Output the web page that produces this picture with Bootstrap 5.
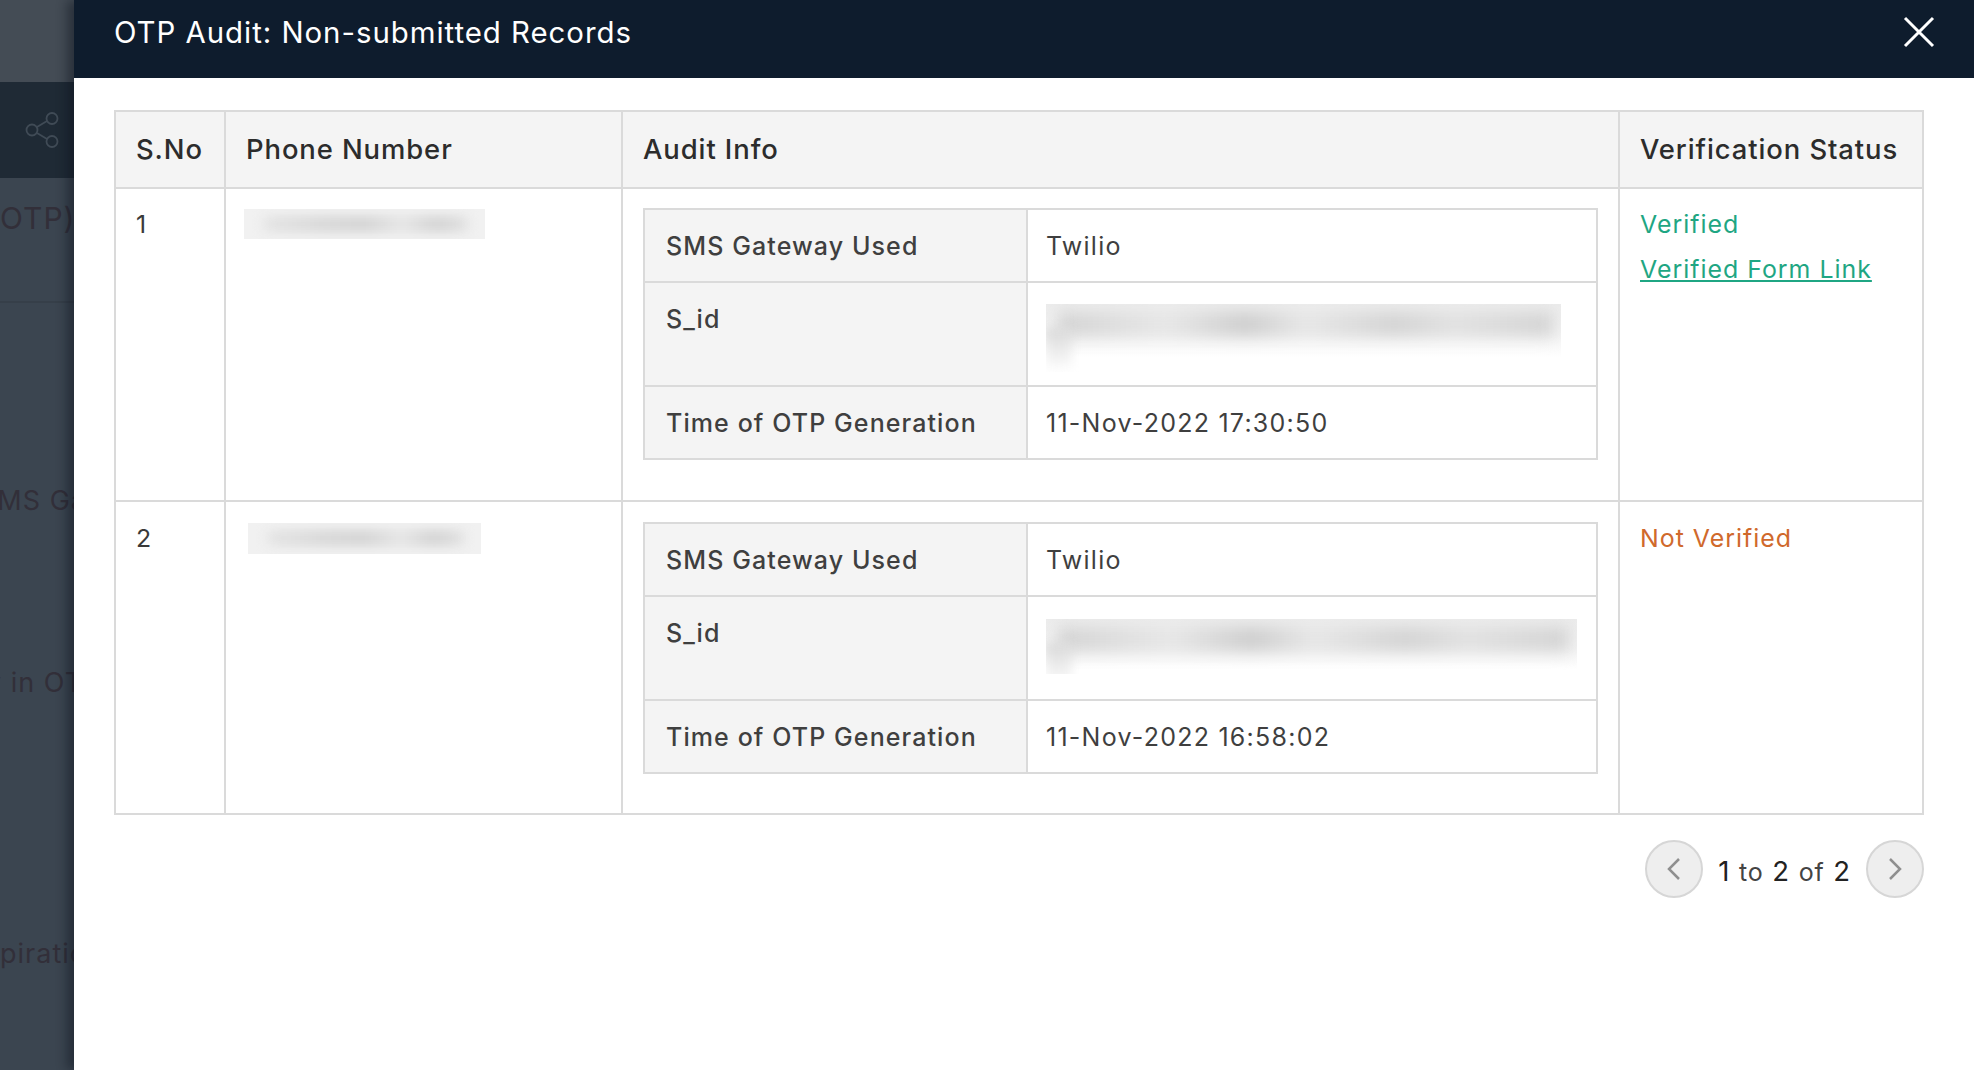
<!DOCTYPE html>
<html lang="en">
<head>
<meta charset="utf-8">
<title>OTP Audit</title>
<link rel="stylesheet" href="https://cdn.jsdelivr.net/npm/bootstrap@5.3.0/dist/css/bootstrap.min.css">
<style>
html,body{height:1070px;overflow:hidden;background:#3b4550;font-family:Inter,"Liberation Sans",sans-serif;}
.pagewrap{height:1070px;position:relative;overflow:hidden;}
.backstrip{width:74px;height:1070px;overflow:hidden;color:#322f39;font-size:27px;white-space:nowrap;letter-spacing:1px;}
.strip-top{height:82px;background:#444c55;}
.strip-band{height:96px;background:#1f2a35;padding-left:10px;}
.strip-otp{height:125px;border-bottom:2px solid #363f49;padding-top:22px;font-size:30px;line-height:36px;}
.strip-sms{padding-top:181px;line-height:34px;margin-left:-21px;}
.strip-in{padding-top:148px;line-height:34px;margin-left:-14px;}
.strip-exp{padding-top:237px;line-height:34px;}
.sidepanel{position:absolute;left:74px;top:0;right:0;bottom:0;background:#fff;box-shadow:-7px 0 10px rgba(10,18,28,.45);}
.panelhead{height:78px;background:#0e1c2d;color:#fff;padding:0 39px 0 40px;}
.paneltitle{font-size:29.4px;line-height:66px;font-weight:400;margin:0;letter-spacing:.97px;}
.closebtn{background:none;border:0;padding:0;width:32px;height:32px;line-height:0;}
.panelbody{padding:32px 50px 0 40px;}
.audit{table-layout:fixed;width:1808px;border-collapse:collapse;margin:0;}
.audit>thead>tr>th,.audit>tbody>tr>td{border:2px solid #dadada;padding:20px 20px 21px;font-size:24.9px;line-height:30px;vertical-align:top;color:#3a3a3a;background:#fff;box-shadow:none;letter-spacing:1px;}
.audit>thead>tr>th{background:#f4f4f4;font-weight:500;font-size:27.4px;color:#2c2c2c;height:77px;padding-top:22px;padding-bottom:0;letter-spacing:.92px;}
.audit>tbody>tr+tr>td{padding-top:21px;}
.audit>tbody>tr>td.audit-row{height:313px;}
.audit>tbody>tr>td.vno{color:#d0692c;}
.c1{width:110px}.c2{width:397px}.c3{width:997px}.c4{width:304px}
.inner{table-layout:fixed;width:955px;border-collapse:collapse;margin:-1px 0 0;}
.inner th,.inner td{border:2px solid #dadada;padding:21px;font-size:25px;line-height:30px;vertical-align:top;color:#3f3f3f;letter-spacing:1.25px;}
.inner td{padding-left:18px;padding-bottom:0;}
.inner th{width:383px;background:#f4f4f4;font-weight:500;padding-bottom:0;letter-spacing:1.1px;}
.inner tr.r1>*{height:73px;}
.inner tr.r2>*{height:104px;}
.inner tr.r3>*{height:73px;}
.vok{color:#1fa683;line-height:45px;margin-top:-7px;}
.vok a{color:#1fa683;display:block;}
.maskbox{overflow:hidden;position:relative;background:#f1f1f1;}
.mask-p1{width:241px;height:30px;margin:0 0 0 -2px;}
.mask-p2{width:233px;height:31px;margin:0 0 0 2px;}
.maskbar{position:absolute;filter:blur(6px);background:linear-gradient(to right,#e2e2e2,#d4d4d4 30%,#d0d0d0 50%,#e4e4e4 68%,#cfcfcf 85%,#dedede);}
.mask-p1 .maskbar,.mask-p2 .maskbar{left:20px;right:18px;top:8px;height:14px;}
.maskid{background:#fff;}
.mask-i1{width:515px;height:68px;background:linear-gradient(#ececec,#f3f3f3 45%,#fff 78%);}
.mask-i2{width:531px;height:55px;margin-top:1px;background:linear-gradient(#ececec,#f3f3f3 55%,#fff 92%);}
.maskid .maskbar{left:12px;right:8px;top:8px;height:24px;filter:blur(8px);background:linear-gradient(to right,#d2d2d2,#e6e6e6 22%,#cccccc 38%,#e6e6e6 50%,#d2d2d2 68%,#e0e0e0 80%,#d2d2d2);}
.maskid .masktail{position:absolute;left:0;top:24px;width:26px;height:44px;background:linear-gradient(#d8d8d8,#fff);filter:blur(5px);}
.pagerrow{margin-top:25px;height:58px;}
.pgbtn{width:58px;height:58px;border-radius:50%;background:#eee;border:2px solid #d6d6d6;padding:0;line-height:0;}
.pgtext{font-size:27.5px;color:#222;padding:0 15px;line-height:58px;margin-top:4px;letter-spacing:.9px;}
.pgtext span{font-size:25px;color:#444;}
</style>
</head>
<body>
<div class="pagewrap">
  <div class="backstrip">
    <div class="strip-top"></div>
    <div class="strip-band d-flex align-items-center justify-content-center">
      <svg width="34" height="36" viewBox="0 0 34 36" fill="none" stroke="#404b56" stroke-width="1.800"><circle cx="7" cy="18" r="5.500"/><circle cx="27" cy="6.500" r="5.500"/><circle cx="27" cy="29.500" r="5.500"/><path d="M12 15 22 9M12 21 22 27"/></svg>
    </div>
    <div class="strip-otp">OTP)</div>
    <div class="strip-sms">SMS Gateway</div>
    <div class="strip-in">y in OTP</div>
    <div class="strip-exp">piration</div>
  </div>
  <div class="sidepanel">
    <div class="panelhead d-flex justify-content-between">
      <h5 class="paneltitle">OTP Audit: Non-submitted Records</h5>
      <button class="closebtn mt-3" type="button" aria-label="Close">
        <svg width="32" height="32" viewBox="0 0 32 32" stroke="#fff" stroke-width="3" fill="none"><path d="M2 2 30 30M30 2 2 30"/></svg>
      </button>
    </div>
    <div class="panelbody">
      <table class="table audit">
        <thead>
          <tr><th class="c1">S.No</th><th class="c2">Phone Number</th><th class="c3">Audit Info</th><th class="c4">Verification Status</th></tr>
        </thead>
        <tbody>
          <tr>
            <td class="audit-row">1</td>
            <td><div class="maskbox mask-p1"><div class="maskbar"></div></div></td>
            <td>
              <table class="inner">
                <tr class="r1"><th>SMS Gateway Used</th><td>Twilio</td></tr>
                <tr class="r2"><th>S_id</th><td><div class="maskbox maskid mask-i1"><div class="maskbar"></div><div class="masktail"></div></div></td></tr>
                <tr class="r3"><th>Time of OTP Generation</th><td>11-Nov-2022 17:30:50</td></tr>
              </table>
            </td>
            <td><div class="vok">Verified<a href="#">Verified Form Link</a></div></td>
          </tr>
          <tr>
            <td class="audit-row">2</td>
            <td><div class="maskbox mask-p2"><div class="maskbar"></div></div></td>
            <td>
              <table class="inner">
                <tr class="r1"><th>SMS Gateway Used</th><td>Twilio</td></tr>
                <tr class="r2"><th>S_id</th><td><div class="maskbox maskid mask-i2"><div class="maskbar"></div><div class="masktail"></div></div></td></tr>
                <tr class="r3"><th>Time of OTP Generation</th><td>11-Nov-2022 16:58:02</td></tr>
              </table>
            </td>
            <td class="vno">Not Verified</td>
          </tr>
        </tbody>
      </table>
      <div class="pagerrow d-flex justify-content-end align-items-center">
        <button class="pgbtn" type="button" aria-label="Previous"><svg width="16" height="22" viewBox="0 0 16 22" fill="none" stroke="#8f8f8f" stroke-width="2.500"><path d="M13 1 3 11l10 10"/></svg></button>
        <div class="pgtext">1 <span>to</span> 2 <span>of</span> 2</div>
        <button class="pgbtn" type="button" aria-label="Next"><svg width="16" height="22" viewBox="0 0 16 22" fill="none" stroke="#8f8f8f" stroke-width="2.500"><path d="M3 1l10 10L3 21"/></svg></button>
      </div>
    </div>
  </div>
</div>
<script src="https://cdn.jsdelivr.net/npm/bootstrap@5.3.0/dist/js/bootstrap.bundle.min.js"></script>
</body>
</html>
